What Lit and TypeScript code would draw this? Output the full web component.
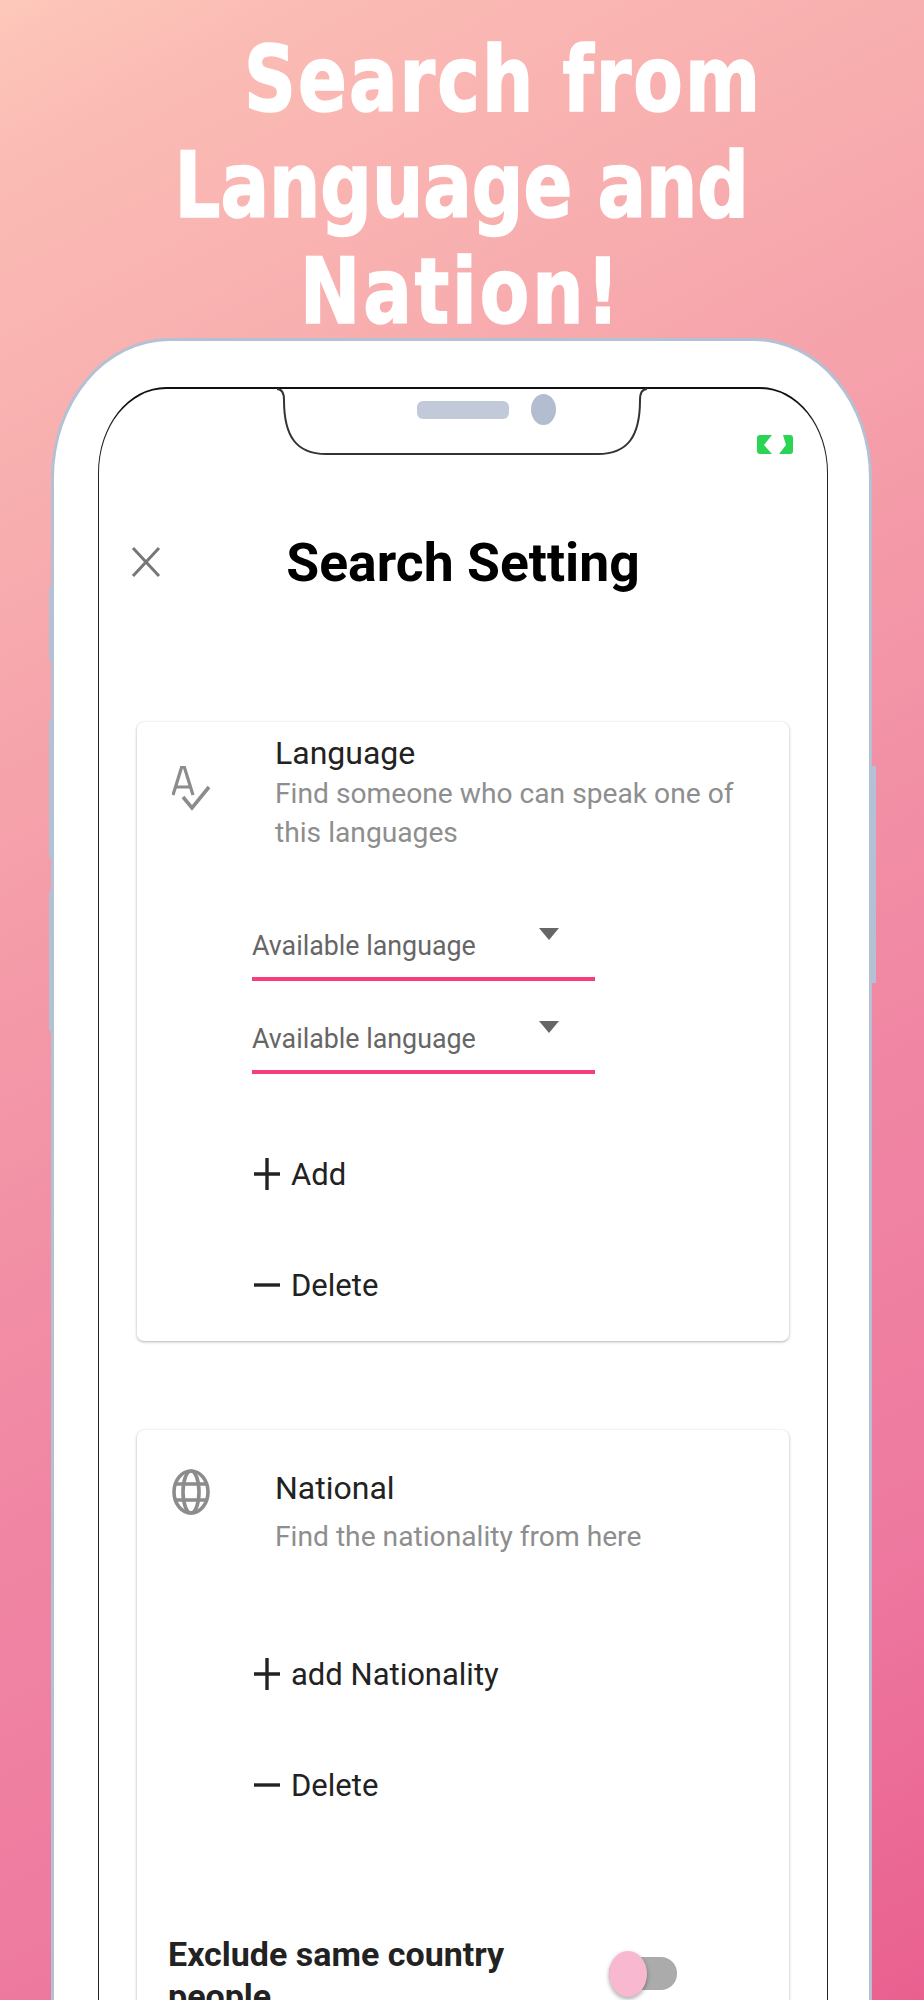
import { LitElement, html, css } from 'lit';
import { customElement } from 'lit/decorators.js';

const closeIcon = html`<svg width="32" height="32" viewBox="0 0 32 32" fill="none" stroke="#777" stroke-width="3"><path d="M3 2 L29 30 M29 2 L3 30" /></svg>`;

const spellIcon = html`<svg width="44" height="50" viewBox="0 0 44 50" fill="none" stroke="#8c8c8c" stroke-width="3.2"><path d="M1 29 L10 0 H12 L21 29 M4 21 H18" /><path d="M11 31 L20 42 L37 21" stroke-width="3.6" /></svg>`;

const globeIcon = html`<svg width="38" height="46" viewBox="0 0 38 46" fill="none" stroke="#8c8c8c" stroke-width="3.6"><ellipse cx="19" cy="23" rx="17" ry="21" /><ellipse cx="19" cy="23" rx="8" ry="21" /><path d="M3 15 H35 M3 31 H35" /></svg>`;

const plusIcon = html`<svg class="glyph" width="28" height="34" viewBox="0 0 28 34" fill="none" stroke="#222" stroke-width="3.4"><path d="M1 17 H27 M14 1 V33" /></svg>`;
const minusIcon = html`<svg class="glyph" width="28" height="34" viewBox="0 0 28 34" fill="none" stroke="#222" stroke-width="3.4"><path d="M1 17 H27" /></svg>`;

@customElement('app-root')
export class AppRoot extends LitElement {
  static styles = css`
    :host {
      display: block;
      width: 924px;
      height: 2000px;
      overflow: hidden;
      position: relative;
      background: linear-gradient(152deg, #fdc8ba 0%, #fbbcb5 6%, #f8afaf 20%, #f49aa8 40%, #f085a3 62%, #ee7aa0 80%, #e9608f 100%);
      font-family: Roboto, "Liberation Sans", sans-serif;
    }

    .headline {
      height: 338px;
      box-sizing: border-box;
      padding-top: 27px;
      font-family: "DejaVu Sans", sans-serif;
      font-weight: 700;
      font-stretch: condensed;
      font-size: 90px;
      line-height: 106px;
      color: #fff;
      -webkit-text-stroke: 1.5px #fff;
      white-space: nowrap;
      display: flex;
      flex-direction: column;
      align-items: center;
    }

    .headline div { transform: scaleX(0.89); }
    .line-1 { margin-left: 82px; letter-spacing: 2.3px; }
    .line-3 { margin-left: -2px; letter-spacing: 3.3px; }

    .phone {
      position: relative;
      width: 821px;
      margin-left: 51px;
      box-sizing: border-box;
      height: 1800px;
      padding: 46px 41px 0 44px;
      background: #fff;
      border: 3px solid #b4c0d4;
      border-bottom: 0;
      border-radius: 118px 118px 0 0 / 140px 140px 0 0;
    }

    .side {
      position: absolute;
      width: 4px;
      background: #b4c0d4;
    }

    .btn-a { left: -5px; top: 247px; height: 72px; }
    .btn-b { left: -5px; top: 379px; height: 138px; }
    .btn-c { left: -5px; top: 550px; height: 140px; }
    .btn-d { right: -7px; top: 425px; height: 217px; }

    .screen {
      position: relative;
      height: 1700px;
      box-sizing: border-box;
      border: 1.5px solid #222;
      border-top: 2.5px solid #111;
      border-bottom: 0;
      border-radius: 68px 68px 0 0 / 86px 86px 0 0;
      padding: 0 38px;
    }

    .notch {
      position: absolute;
      left: 177px;
      top: -3px;
      display: block;
    }

    .speaker {
      position: absolute;
      left: 318px;
      top: 12px;
      width: 92px;
      height: 18px;
      border-radius: 6px;
      background: #c2cada;
    }

    .camera {
      position: absolute;
      left: 432px;
      top: 5px;
      width: 25px;
      height: 31px;
      border-radius: 50%;
      background: #b3bdd0;
    }

    .status {
      position: absolute;
      left: 658px;
      top: 46px;
      display: block;
    }

    .top-bar {
      height: 333px;
      display: flex;
      align-items: flex-start;
      justify-content: center;
      position: relative;
    }

    .close {
      position: absolute;
      left: -7px;
      top: 157px;
    }

    h1 {
      margin: 144px 0 0;
      font-size: 53.5px;
      line-height: 60px;
      font-weight: 700;
      color: #000;
    }

    .card {
      background: #fff;
      border-radius: 7px;
      box-shadow: 0 1px 3px rgba(0, 0, 0, 0.3), 0 0 1px rgba(0, 0, 0, 0.08);
      box-sizing: border-box;
    }

    .card-language { height: 619px; margin-bottom: 89px; }
    .card-national { height: 900px; }

    .head {
      display: grid;
      grid-template-columns: 138px 1fr;
      padding-right: 30px;
      box-sizing: border-box;
    }

    .head-icon {
      padding-left: 35px;
    }

    .head-language .head-icon { padding-top: 33px; }
    .head-national .head-icon { padding-top: 1px; }
    .head-language { padding-top: 11px; height: 166px; }
    .head-national { padding-top: 38px; height: 188px; }

    .title {
      font-size: 32px;
      line-height: 40px;
      color: #222;
    }

    .sub {
      margin-top: 1px;
      font-size: 28.2px;
      line-height: 39px;
      color: #8e8e8e;
    }

    .head-national .sub { margin-top: 9px; }

    .select {
      position: relative;
      margin-left: 115px;
      width: 343px;
      height: 93px;
      box-sizing: border-box;
      border-bottom: 4px solid #f73e7c;
      font-size: 26.8px;
      line-height: 36px;
      color: #666;
      padding-top: 40px;
    }

    .arrow {
      position: absolute;
      right: 36px;
      top: 40px;
      width: 0;
      height: 0;
      border-left: 10px solid transparent;
      border-right: 10px solid transparent;
      border-top: 12px solid #666;
    }

    .action {
      display: flex;
      align-items: center;
      gap: 10px;
      margin-left: 116px;
      height: 40px;
      font-size: 31px;
      color: #222;
    }

    .glyph { flex: none; }

    .gap-add { margin-top: 80px; }
    .gap-delete { margin-top: 71px; }
    .gap-national { margin-top: 36px; }

    .exclude {
      display: flex;
      align-items: flex-start;
      justify-content: space-between;
      margin-top: 128px;
      padding-left: 31px;
      padding-right: 112px;
    }

    .exclude-text {
      width: 350px;
      font-size: 34px;
      line-height: 42px;
      font-weight: 700;
      color: #222;
    }

    .toggle {
      position: relative;
      margin-top: 24px;
      width: 68px;
      height: 33px;
      border-radius: 16px;
      background: #ababab;
    }

    .knob {
      position: absolute;
      left: 0;
      top: -6px;
      width: 38px;
      height: 46px;
      border-radius: 50%;
      background: #f8b9d0;
      box-shadow: 0 2px 4px rgba(0, 0, 0, 0.35);
    }
  `;

  render() {
    return html`
      <div class="headline">
        <div class="line-1">Search from</div>
        <div class="line-2">Language and</div>
        <div class="line-3">Nation!</div>
      </div>
      <div class="phone">
        <div class="side btn-a"></div>
        <div class="side btn-b"></div>
        <div class="side btn-c"></div>
        <div class="side btn-d"></div>
        <div class="screen">
          <svg class="notch" width="374" height="74" viewBox="0 0 374 74">
            <path d="M1 3 C6 3 8 7 8 14 C8 50 20 68 50 68 H322 C352 68 364 50 364 14 C364 7 366 3 371 3" fill="#fff" stroke="#333" stroke-width="2" />
          </svg>
          <div class="speaker"></div>
          <div class="camera"></div>
          <svg class="status" width="36" height="20" viewBox="0 0 36 20">
            <path d="M3 0 H15 L7 10 L15 19 H3 Q0 19 0 16 V3 Q0 0 3 0 Z M26 0 H33 Q36 0 36 3 V16 Q36 19 33 19 H22 L29 10 Z" fill="#2bd455" />
          </svg>
          <div class="top-bar">
            <div class="close">${closeIcon}</div>
            <h1>Search Setting</h1>
          </div>
          <section class="card card-language">
            <div class="head head-language">
              <div class="head-icon">${spellIcon}</div>
              <div>
                <div class="title">Language</div>
                <div class="sub">Find someone who can speak one of this languages</div>
              </div>
            </div>
            <div class="select">Available language<span class="arrow"></span></div>
            <div class="select">Available language<span class="arrow"></span></div>
            <div class="action gap-add">${plusIcon}<span>Add</span></div>
            <div class="action gap-delete">${minusIcon}<span>Delete</span></div>
          </section>
          <section class="card card-national">
            <div class="head head-national">
              <div class="head-icon">${globeIcon}</div>
              <div>
                <div class="title">National</div>
                <div class="sub">Find the nationality from here</div>
              </div>
            </div>
            <div class="action gap-national">${plusIcon}<span>add Nationality</span></div>
            <div class="action gap-delete">${minusIcon}<span>Delete</span></div>
            <div class="exclude">
              <div class="exclude-text">Exclude same country people</div>
              <div class="toggle"><div class="knob"></div></div>
            </div>
          </section>
        </div>
      </div>
    `;
  }
}
